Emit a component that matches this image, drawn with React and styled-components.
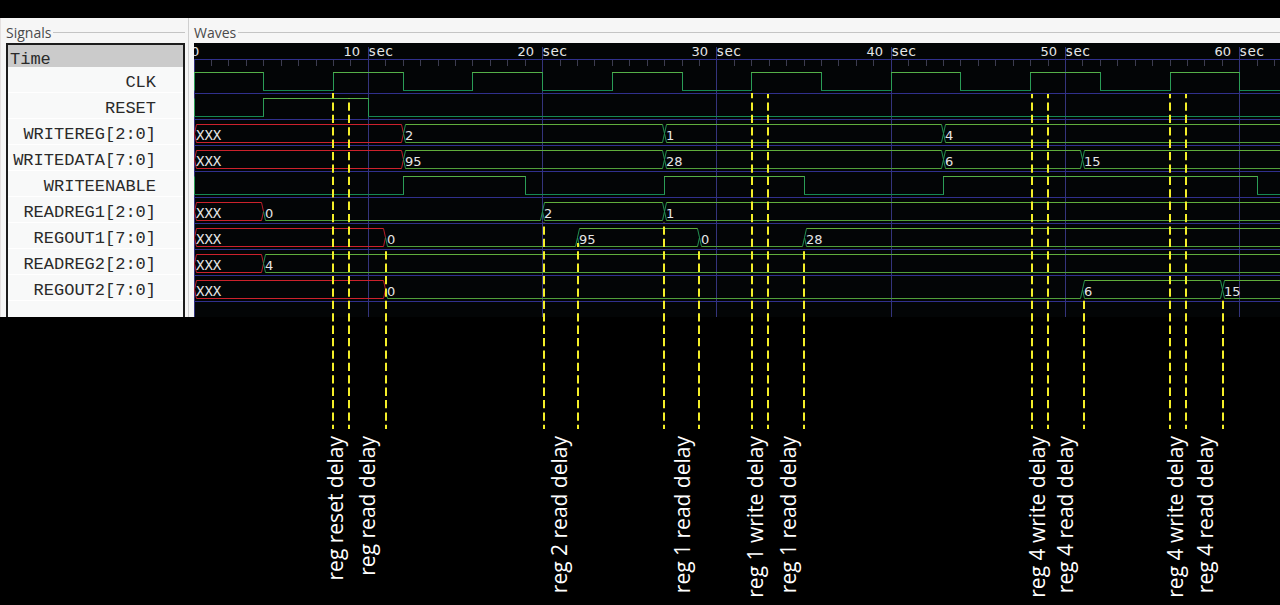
import React, { useEffect, useRef, useState } from "react";
import styled, { createGlobalStyle } from "styled-components";

const GlobalStyle = createGlobalStyle`
  body { margin: 0; background: #000; }
`;

const Page = styled.main`
  min-height: 100vh;
  box-sizing: border-box;
  padding-top: 18px;
  background: #000;
  overflow-x: hidden;
`;

const Viewer = styled.div`
  display: flex;
  background: #f6f6f6;
`;

const SignalsPanel = styled.section`
  flex: none;
  width: 189px;
  box-sizing: border-box;
  border-left: 1px solid #e4e0e0;
  border-right: 1px solid #cfcfcf;
  padding: 0 3px 0 5px;
`;

const WavesPanel = styled.section`
  flex: 1;
  min-width: 0;
  padding-left: 5px;
  box-sizing: border-box;
`;

const PanelTitle = styled.h2`
  display: flex;
  align-items: center;
  gap: 2px;
  height: 25px;
  margin: 0;
  padding-top: 4px;
  box-sizing: border-box;
  font: 400 14px/20px "Open Sans", "Noto Sans", sans-serif;
  color: #4a4a4a;

  &::after {
    content: "";
    flex: 1;
    height: 1px;
    background: #c4c4c4;
  }
`;

const SignalList = styled.ul`
  list-style: none;
  margin: 0;
  padding: 0;
  border: 2px solid #1c1c1c;
  border-bottom: 0;
  height: 274px;
  box-sizing: border-box;
  background: #f8f9f9;
  font: 17px/26px "Liberation Mono", "Courier New", monospace;
  color: #2a2a2a;
`;

const TimeRow = styled.li`
  height: 22px;
  padding-left: 2px;
  background: #cbcbcb;
  line-height: 30px;
`;

const SignalRow = styled.li`
  display: flex;
  justify-content: flex-end;
  height: 26px;
  box-sizing: border-box;
  padding-right: 27px;
  border-bottom: 1px solid #fff;
  line-height: 32px;
  white-space: nowrap;
`;

const WaveBody = styled.div`
  position: relative;
  height: 274px;
  background: #030506;
`;

const WaveChart = styled.svg`
  display: block;
  width: 100%;
  height: 100%;
  overflow: hidden;
`;

const MarkerLayer = styled.svg`
  position: absolute;
  top: 0;
  left: 0;
  width: 100%;
  height: 386px;
  overflow: hidden;
  pointer-events: none;
`;

const Notes = styled.section`
  position: relative;
  min-height: 288px;
  margin-left: 194px;
`;

const Note = styled.span`
  position: absolute;
  top: 119px;
  left: ${(p) => p.$x}px;
  writing-mode: vertical-rl;
  transform: rotate(180deg);
  white-space: nowrap;
  font: 21px/28px "Open Sans", "Noto Sans", sans-serif;
  color: #fff;
`;

const Reading = styled.text`
  font: 13px "DejaVu Sans", sans-serif;
  fill: #e6e6e6;
`;

const MonoReading = styled(Reading)`
  font: 14px "DejaVu Sans Mono", monospace;
`;

const UNIT = 17.43;
const px = (t) => Math.floor(t * UNIT);

const signals = [
  { name: "CLK", period: 8 },
  { name: "RESET", levels: [[0, 0], [4, 1], [10, 0]] },
  { name: "WRITEREG[2:0]", bus: [[0, "XXX"], [12, "2"], [27, "1"], [43, "4"]] },
  { name: "WRITEDATA[7:0]", bus: [[0, "XXX"], [12, "95"], [27, "28"], [43, "6"], [51, "15"]] },
  { name: "WRITEENABLE", levels: [[0, 0], [12, 1], [19, 0], [27, 1], [35, 0], [43, 1], [61, 0]] },
  { name: "READREG1[2:0]", bus: [[0, "XXX"], [4, "0"], [20, "2"], [27, "1"]] },
  { name: "REGOUT1[7:0]", bus: [[0, "XXX"], [11, "0"], [22, "95"], [29, "0"], [35, "28"]] },
  { name: "READREG2[2:0]", bus: [[0, "XXX"], [4, "4"]] },
  { name: "REGOUT2[7:0]", bus: [[0, "XXX"], [11, "0"], [51, "6"], [59, "15"]] },
];

const markers = [
  [139, 50], [155, 55], [192, 205], [350, 179], [384, 200], [470, 179],
  [505, 205], [558, 50], [574, 51], [610, 205], [838, 51], [854, 51],
  [890, 256], [976, 51], [992, 51], [1029, 256],
];

const notes = [
  ["reg reset delay", 127], ["reg read delay", 159], ["reg 2 read delay", 351],
  ["reg 1 read delay", 474], ["reg 1 write delay", 547], ["reg 1 read delay", 580],
  ["reg 4 write delay", 829], ["reg 4 read delay", 857],
  ["reg 4 write delay", 967], ["reg 4 read delay", 997],
];

function clockLevels(period, end) {
  const levels = [];
  for (let t = 0; t < end; t += period) levels.push([t, 1], [t + period / 2, 0]);
  return levels;
}

function Ruler({ end }) {
  const ticks = Array.from({ length: end }, (_, i) => i);
  const majors = ticks.filter((t) => t && t % 10 === 0 && t < end - 1);
  return (
    <g>
      <path d={`M0 16.5H${px(end)}`} stroke="#30308c" />
      {ticks.map((t) => (
        <path
          key={t}
          d={t % 10 ? `M${px(t) + 0.5} 17V23` : `M${px(t) + 0.5} ${t ? 4 : 16}V274`}
          stroke={t % 10 ? "#3c3c50" : "#34347c"}
        />
      ))}
      <Reading x="-3" y="13">0</Reading>
      {majors.map((t) => (
        <g key={t}>
          <Reading x={px(t) - 8} y="13" textAnchor="end">{t}</Reading>
          <MonoReading x={px(t)} y="13">sec</MonoReading>
        </g>
      ))}
    </g>
  );
}

function LevelTrace({ levels, y, end }) {
  const high = y + 0.5;
  const low = y + 18.5;
  return levels.map(([t, v], i) => {
    const next = i + 1 < levels.length ? levels[i + 1][0] : end;
    return (
      <g key={t} fill="none">
        <path d={`M${px(t) + 0.5} ${high}V${low}`} stroke="#2a9c56" />
        <path
          d={`M${px(t)} ${v ? high : low}H${px(next) + 1}`}
          stroke={v ? "#55b048" : "#168852"}
        />
      </g>
    );
  });
}

function BusTrace({ values, y, end }) {
  const high = y + 0.5;
  const mid = y + 9.5;
  const low = y + 18.5;
  return values.map(([t, v], i) => {
    const a = px(t) + 0.5;
    const b = px(i + 1 < values.length ? values[i + 1][0] : end) + 0.5;
    const unknown = v === "XXX";
    const edge = unknown ? "#b81c28" : "#229050";
    const Value = unknown ? MonoReading : Reading;
    return (
      <g key={t} fill="none">
        {v !== "0" && (
          <>
            <path d={`M${a} ${mid}L${a + 2} ${high}M${b - 2} ${high}L${b} ${mid}`} stroke={edge} />
            <path d={`M${a + 2} ${high}H${b - 2}`} stroke={unknown ? "#cc222c" : "#60ae3c"} />
          </>
        )}
        <path d={`M${a} ${mid}L${a + 2} ${low}M${b - 2} ${low}L${b} ${mid}`} stroke={edge} />
        <path d={`M${a + 2} ${low}H${b - 2}`} stroke={unknown ? "#cc222c" : "#509e3a"} />
        <Value x={px(t) + 2} y={y + 16}>{v}</Value>
      </g>
    );
  });
}

function useTimeSpan(ref) {
  const [end, setEnd] = useState(64);
  useEffect(() => {
    const observer = new ResizeObserver(([entry]) =>
      setEnd(Math.max(64, Math.ceil(entry.contentRect.width / UNIT) + 1))
    );
    observer.observe(ref.current);
    return () => observer.disconnect();
  }, [ref]);
  return end;
}

export default function App() {
  const body = useRef(null);
  const end = useTimeSpan(body);
  return (
    <Page>
      <GlobalStyle />
      <Viewer>
        <SignalsPanel>
          <PanelTitle>Signals</PanelTitle>
          <SignalList>
            <TimeRow>Time</TimeRow>
            {signals.map((s) => (
              <SignalRow key={s.name}>{s.name}</SignalRow>
            ))}
          </SignalList>
        </SignalsPanel>
        <WavesPanel>
          <PanelTitle>Waves</PanelTitle>
          <WaveBody ref={body}>
            <WaveChart role="img" aria-label="Signal waveforms">
              <Ruler end={end} />
              {signals.map((s, i) => {
                const y = 29 + i * 26;
                return (
                  <g key={s.name}>
                    <path d={`M0 ${y + 21.5}H${px(end)}`} stroke="#30308c" />
                    {s.bus ? (
                      <BusTrace values={s.bus} y={y} end={end} />
                    ) : (
                      <LevelTrace
                        levels={s.levels || clockLevels(s.period, end)}
                        y={y}
                        end={end}
                      />
                    )}
                  </g>
                );
              })}
            </WaveChart>
            <MarkerLayer aria-hidden="true">
              {markers.map(([x, top]) => (
                <path
                  key={x}
                  d={`M${x} 386V${top}`}
                  stroke="#f4ee28"
                  strokeWidth="2"
                  strokeDasharray="8.3 4.1"
                  strokeDashoffset="4.1"
                />
              ))}
            </MarkerLayer>
          </WaveBody>
        </WavesPanel>
      </Viewer>
      <Notes>
        {notes.map(([label, x]) => (
          <Note key={x} $x={x}>{label}</Note>
        ))}
      </Notes>
    </Page>
  );
}
